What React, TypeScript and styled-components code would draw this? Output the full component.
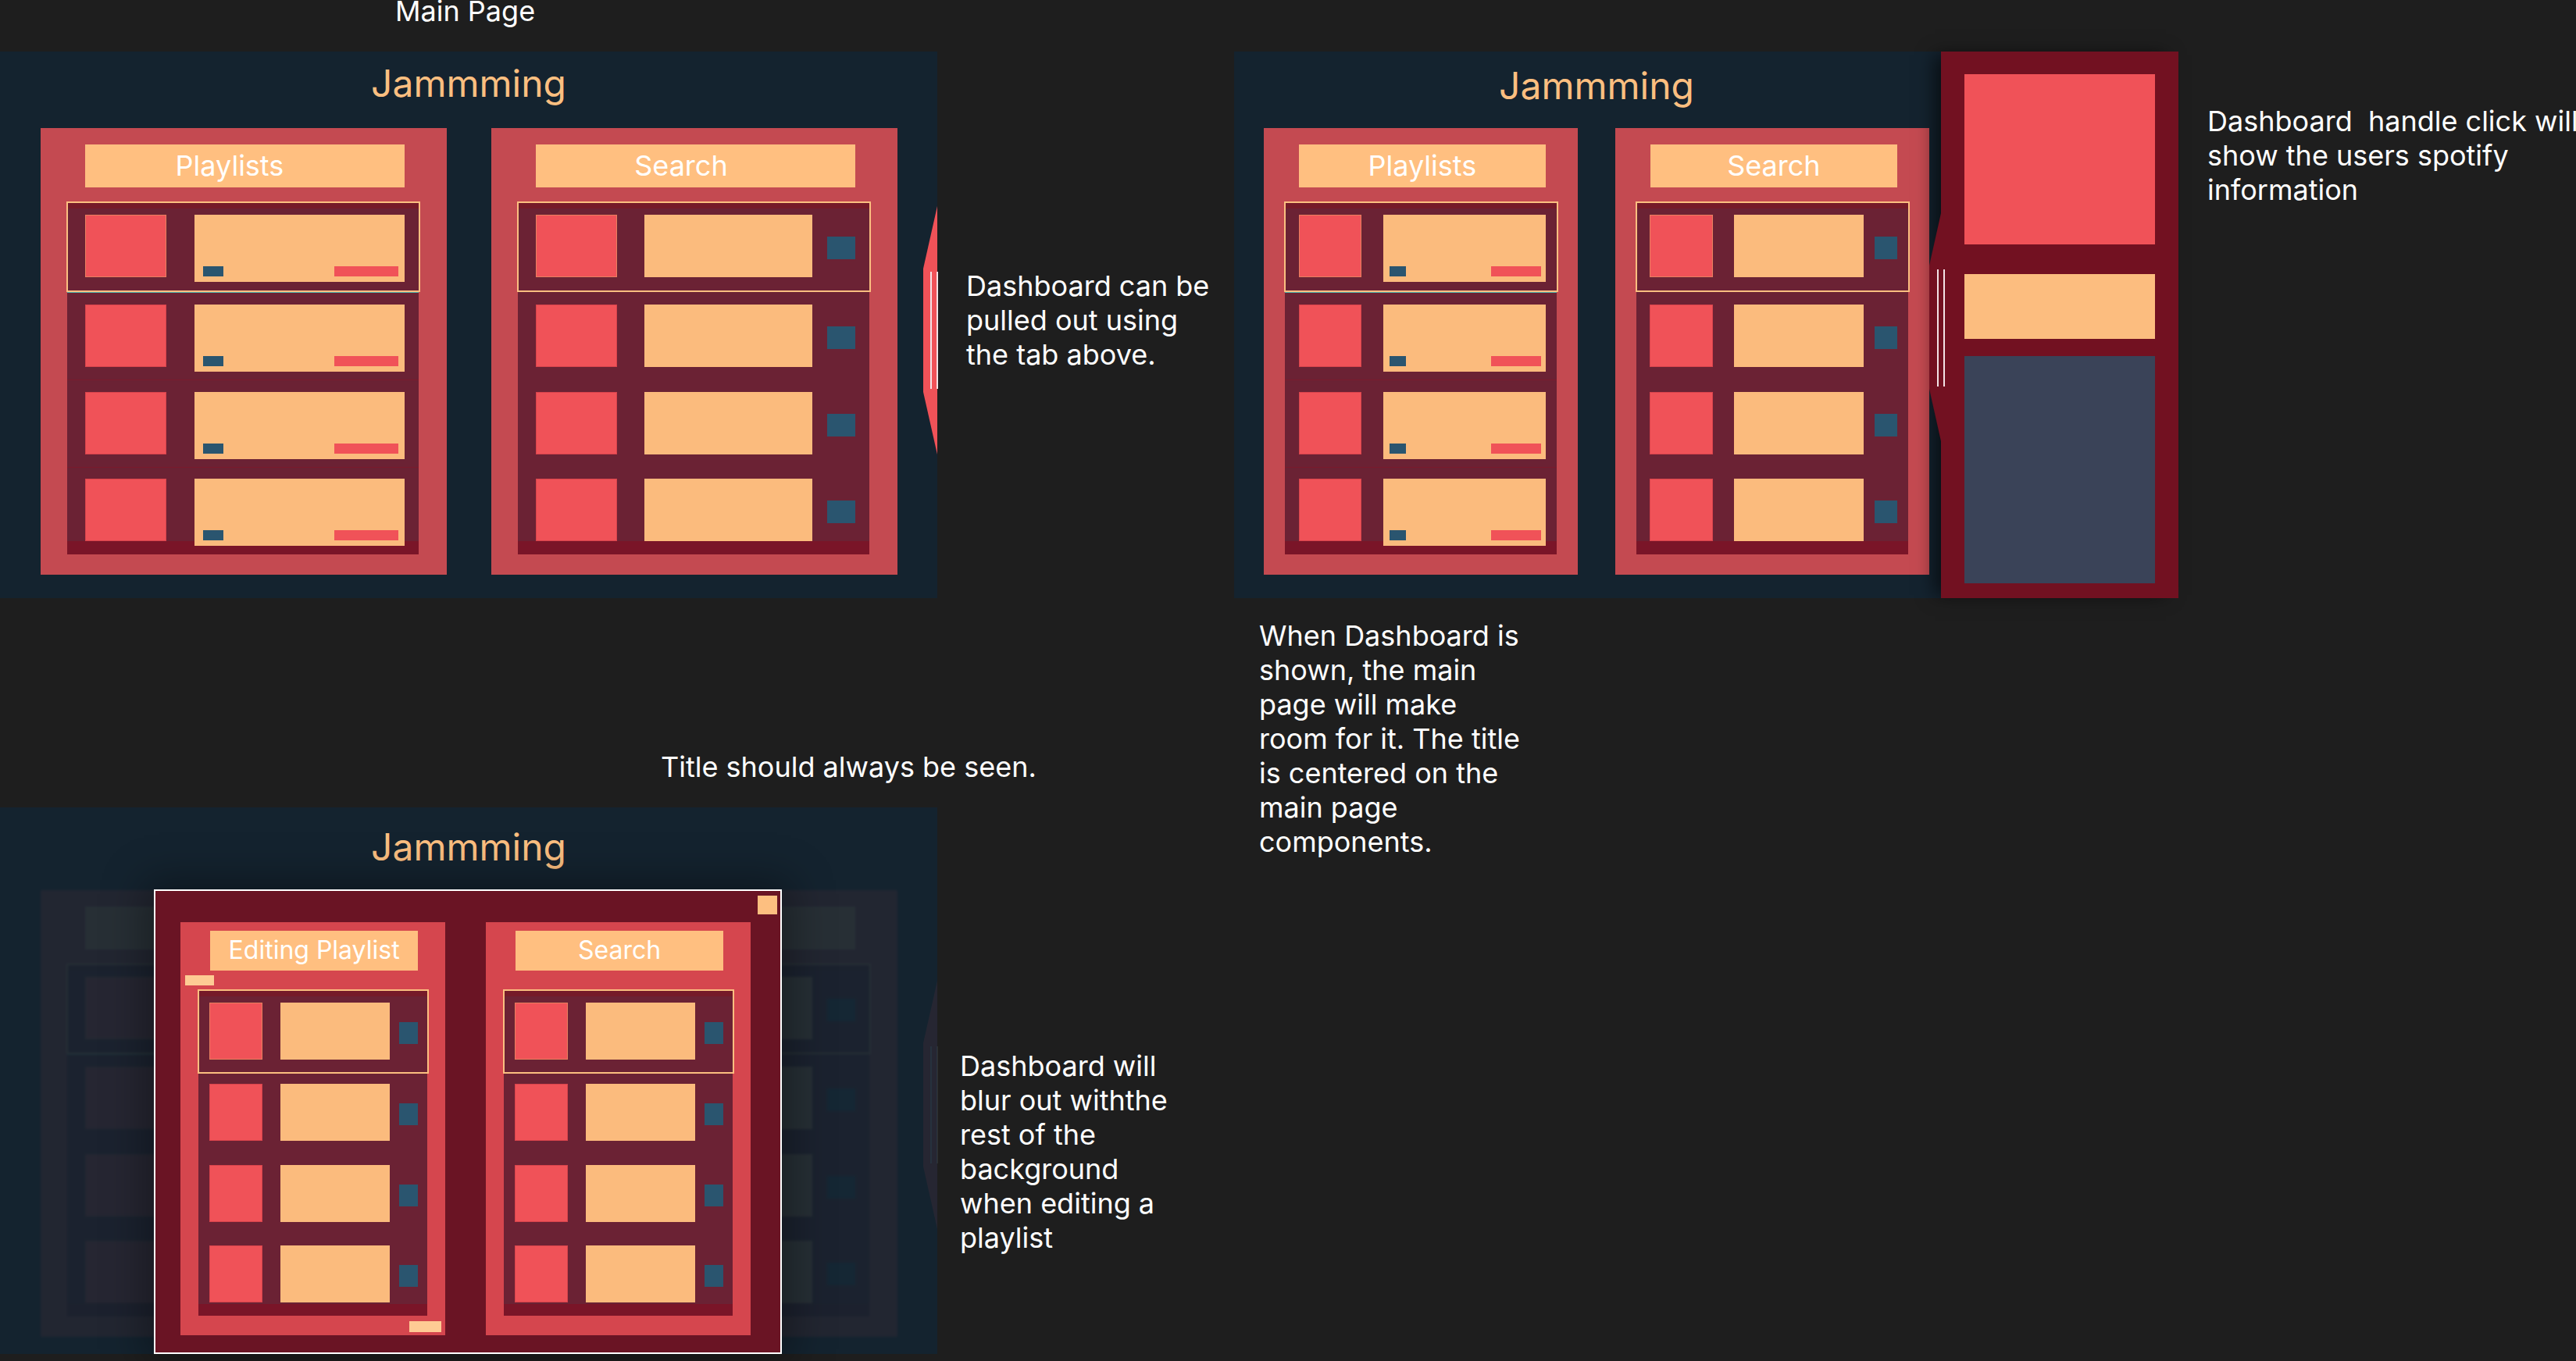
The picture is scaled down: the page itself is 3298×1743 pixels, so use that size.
import React from 'react';
import styled, { createGlobalStyle, css } from 'styled-components';

const GlobalStyle = createGlobalStyle`
  html, body { margin: 0; padding: 0; background: #1e1e1e; overflow: hidden; }
  body { font-family: Inter, "Noto Sans", "Liberation Sans", sans-serif; }
  * { box-sizing: border-box; }
`;

type Dims = {
  panelH: number; headTop: number; headH: number; font: number;
  listGap: number; listH: number; rowH: number[]; itemTop: number[];
  redH: number; cardH: number; sCardH: number; blueH: number;
  topStrip: number; bottomStrip: number;
};

const BIG: Dims = {
  panelH: 572, headTop: 21, headH: 55, font: 36, listGap: 19, listH: 451,
  rowH: [115, 112, 112, 112], itemTop: [16, 16, 16, 15],
  redH: 80, cardH: 86, sCardH: 80, blueH: 29, topStrip: 8, bottomStrip: 17,
};

const SMALL: Dims = {
  panelH: 529, headTop: 11, headH: 51, font: 32, listGap: 25, listH: 417,
  rowH: [107, 104, 103, 103], itemTop: [16, 13, 13, 13],
  redH: 73, cardH: 73, sCardH: 73, blueH: 28, topStrip: 8, bottomStrip: 15,
};

const Canvas = styled.div`
  position: relative;
  width: 3298px;
  height: 1743px;
  overflow: hidden;
  background: #1e1e1e;
`;

const Note = styled.div<{ $x: number; $y: number }>`
  position: absolute;
  left: ${p => p.$x}px;
  top: ${p => p.$y}px;
  color: #ffffff;
  font-size: 36px;
  line-height: 44px;
  white-space: pre;
`;

const Frame = styled.div<{ $x: number; $y: number; $w: number }>`
  position: absolute;
  left: ${p => p.$x}px;
  top: ${p => p.$y}px;
  width: ${p => p.$w}px;
  height: 700px;
  background: #14232f;
  display: flex;
  justify-content: center;
`;

const SplitFrame = styled(Frame)`
  justify-content: flex-start;
`;

const MainArea = styled.div`
  width: 905px;
  padding-left: 38px;
  display: flex;
`;

const MainColumn = styled.div<{ $pt: number; $gap: number }>`
  padding-top: ${p => p.$pt}px;
  display: flex;
  flex-direction: column;
  gap: ${p => p.$gap}px;
`;

const Title = styled.h1`
  margin: 0;
  font-size: 48px;
  line-height: 58px;
  font-weight: 400;
  color: #fbbf80;
  text-align: center;
`;

const PanelRow = styled.div<{ $gap: number }>`
  display: flex;
  gap: ${p => p.$gap}px;
`;

const Dimmed = styled.div`
  opacity: 0.08;
  filter: blur(1.5px);
`;

const PanelBox = styled.div<{ $w: number; $h: number; $bg: string }>`
  position: relative;
  flex: none;
  width: ${p => p.$w}px;
  height: ${p => p.$h}px;
  background: ${p => p.$bg};
  display: flex;
  flex-direction: column;
`;

const Header = styled.div<{ $top: number; $h: number; $font: number; $shift: number }>`
  margin: ${p => p.$top}px 0 0 11.15%;
  width: 78.65%;
  height: ${p => p.$h}px;
  padding-right: ${p => p.$shift}px;
  background: #ffbf80;
  color: #ffffff;
  font-size: ${p => p.$font}px;
  line-height: 1.21;
  display: flex;
  align-items: center;
  justify-content: center;
  white-space: nowrap;
`;

const Tag = styled.div<{ $w: number; $h: number; $m: string; $end?: boolean }>`
  flex: none;
  width: ${p => p.$w}px;
  height: ${p => p.$h}px;
  margin: ${p => p.$m};
  background: #fecb94;
  align-self: ${p => (p.$end ? 'flex-end' : 'flex-start')};
`;

const ListBox = styled.div<{ $mt: number; $h: number; $strip: number; $bottom: number }>`
  position: relative;
  margin: ${p => p.$mt}px 0 0 6.73%;
  width: 86.54%;
  height: ${p => p.$h}px;
  background: #6b2234;
  display: flex;
  flex-direction: column;
  &::before {
    content: '';
    position: absolute;
    left: 0;
    right: 0;
    top: 0;
    height: ${p => p.$strip}px;
    background: #751a29;
  }
  &::after {
    content: '';
    position: absolute;
    left: 0;
    right: 0;
    bottom: 0;
    height: ${p => p.$bottom}px;
    background: #7a1528;
  }
`;

const Row = styled.div<{ $h: number; $pt: number; $sel?: boolean; $sep?: string }>`
  position: relative;
  z-index: 1;
  flex: none;
  height: ${p => p.$h}px;
  padding-top: ${p => p.$pt}px;
  display: flex;
  align-items: flex-start;
  ${p => p.$sep && css`box-shadow: inset 0 1px 0 ${p.$sep};`}
  ${p =>
    p.$sel &&
    css`
      &::before {
        content: '';
        position: absolute;
        top: -1px;
        left: -1px;
        right: -2px;
        bottom: 0;
        border: 2px solid #fbbf80;
        pointer-events: none;
      }
    `}
`;

const Thumb = styled.div<{ $h: number; $ml: string; $w: string; $edge: string }>`
  flex: none;
  margin-left: ${p => p.$ml};
  width: ${p => p.$w};
  height: ${p => p.$h}px;
  background: #f05258;
  box-shadow: inset 0 0 0 1px ${p => p.$edge};
`;

const TrackCard = styled.div<{ $h: number; $ml: string; $w: string }>`
  flex: none;
  margin-left: ${p => p.$ml};
  width: ${p => p.$w};
  height: ${p => p.$h}px;
  background: #fbbb7d;
  display: flex;
  align-items: flex-end;
  justify-content: space-between;
  padding-bottom: 7px;
`;

const CardChip = styled.div`
  margin-left: 4.1%;
  width: 9.7%;
  height: 13px;
  background: #2a556f;
`;

const CardBar = styled.div`
  margin-right: 3%;
  width: 30.5%;
  height: 13px;
  background: #f05258;
`;

const AddButton = styled.div<{ $h: number; $mt: number }>`
  flex: none;
  margin-left: 4.2%;
  margin-top: ${p => p.$mt}px;
  width: 8.2%;
  height: ${p => p.$h}px;
  background: #2a556f;
`;

type PanelProps = {
  title: string;
  kind: 'playlist' | 'search';
  w: number;
  d: Dims;
  bg?: string;
  extras?: boolean;
  shift?: number;
};

function Panel({ title, kind, w, d, bg = '#c44a51', extras, shift = 0 }: PanelProps) {
  return (
    <PanelBox $w={w} $h={d.panelH} $bg={bg}>
      <Header $top={d.headTop} $h={d.headH} $font={d.font} $shift={shift}>{title}</Header>
      {extras && <Tag $w={37} $h={13} $m="6px 0 6px 6px" />}
      <ListBox $mt={extras ? 0 : d.listGap} $h={d.listH} $strip={d.topStrip} $bottom={d.bottomStrip}>
        {d.rowH.map((h, i) => {
          const sep =
            kind === 'playlist' ? (i === 1 ? '#4eb2ab' : i > 1 ? '#7a1a2c' : undefined) : undefined;
          const edge = i === 0 ? '#e8805f' : '#d8444c';
          return (
            <Row key={i} $h={h} $pt={d.itemTop[i]} $sel={i === 0} $sep={sep}>
              {kind === 'playlist' ? (
                <>
                  <Thumb $h={d.redH} $ml="5.1%" $w="23.1%" $edge={edge} />
                  <TrackCard $h={d.cardH} $ml="8%" $w="59.8%">
                    <CardChip />
                    <CardBar />
                  </TrackCard>
                </>
              ) : (
                <>
                  <Thumb $h={d.redH} $ml="4.9%" $w="23.2%" $edge={edge} />
                  <TrackCard $h={d.sCardH} $ml="7.8%" $w="47.7%" />
                  <AddButton $h={d.blueH} $mt={(d.redH - d.blueH) / 2 + 2.5} />
                </>
              )}
            </Row>
          );
        })}
      </ListBox>
      {extras && <Tag $w={41} $h={14} $m="7px 5px 0 0" $end />}
    </PanelBox>
  );
}

const HandleWrap = styled.div<{ $x: number; $y: number; $w: number; $h: number; $dim?: boolean }>`
  position: absolute;
  left: ${p => p.$x}px;
  top: ${p => p.$y}px;
  width: ${p => p.$w}px;
  height: ${p => p.$h}px;
  ${p => p.$dim && css`opacity: 0.08;`}
`;

const HandleTab = styled.div<{ $cut: number; $color: string; $tw: number }>`
  position: absolute;
  left: 0;
  top: 0;
  bottom: 0;
  width: ${p => p.$tw}px;
  background: ${p => p.$color};
  clip-path: polygon(100% 0, 0 ${p => p.$cut}px, 0 calc(100% - ${p => p.$cut}px), 100% 100%);
`;

const Grip = styled.div<{ $x: number; $top: number; $h: number }>`
  position: absolute;
  left: ${p => p.$x}px;
  top: ${p => p.$top}px;
  width: 2px;
  height: ${p => p.$h}px;
  background: #f3e3e6;
`;

type HandleProps = {
  x: number; y: number; w: number; tw: number; h: number; cut: number;
  color: string; grips: [number, number]; gripTop: number; dim?: boolean;
};

function Handle({ x, y, w, tw, h, cut, color, grips, gripTop, dim }: HandleProps) {
  return (
    <HandleWrap $x={x} $y={y} $w={w} $h={h} $dim={dim}>
      <HandleTab $cut={cut} $color={color} $tw={tw} />
      <Grip $x={grips[0]} $top={gripTop} $h={150} />
      <Grip $x={grips[1]} $top={gripTop} $h={150} />
    </HandleWrap>
  );
}

const Dashboard = styled.aside`
  position: relative;
  z-index: 2;
  flex: none;
  width: 304px;
  height: 100%;
  background: #721121;
  padding: 29px 30px 0;
  display: flex;
  flex-direction: column;
  box-shadow: -12px 0 22px -4px rgba(0, 0, 0, 0.6);
`;

const DashBlock = styled.div<{ $h: number; $mt: number; $bg: string }>`
  flex: none;
  height: ${p => p.$h}px;
  margin-top: ${p => p.$mt}px;
  background: ${p => p.$bg};
`;

const Modal = styled.div`
  position: absolute;
  left: 197px;
  top: 105px;
  width: 804px;
  height: 595px;
  border: 2px solid #ffffff;
  background: #6a1424;
  padding: 40px 38px 0 32px;
  display: flex;
  gap: 52px;
  box-shadow: 0 0 50px 12px rgba(0, 0, 0, 0.35);
`;

const CloseSquare = styled.div`
  position: absolute;
  top: 6px;
  right: 4px;
  width: 25px;
  height: 24px;
  background: #fdbf80;
`;

export default function App() {
  return (
    <Canvas>
      <GlobalStyle />

      <Note $x={506} $y={-8}>Main Page</Note>

      <Frame $x={0} $y={66} $w={1200}>
        <MainColumn $pt={12} $gap={28}>
          <Title>Jammming</Title>
          <PanelRow $gap={57}>
            <Panel title="Playlists" kind="playlist" w={520} d={BIG} shift={40} />
            <Panel title="Search" kind="search" w={520} d={BIG} shift={38} />
          </PanelRow>
        </MainColumn>
        <Handle x={1182} y={198} w={18} tw={18} h={318} cut={80} color="#f05258" grips={[9, 17]} gripTop={84} />
      </Frame>

      <Note $x={1237} $y={344}>{'Dashboard can be\npulled out using\nthe tab above.'}</Note>

      <SplitFrame $x={1580} $y={66} $w={1209}>
        <MainArea>
          <MainColumn $pt={15} $gap={25}>
            <Title>Jammming</Title>
            <PanelRow $gap={48}>
              <Panel title="Playlists" kind="playlist" w={402} d={BIG} />
              <Panel title="Search" kind="search" w={402} d={BIG} />
            </PanelRow>
          </MainColumn>
        </MainArea>
        <Dashboard>
          <Handle x={-15} y={207} w={20} tw={15} h={292} cut={67} color="#721121" grips={[10, 18]} gripTop={72} />
          <DashBlock $h={218} $mt={0} $bg="#f05258" />
          <DashBlock $h={83} $mt={38} $bg="#fcbd7f" />
          <DashBlock $h={291} $mt={22} $bg="#3a4358" />
        </Dashboard>
      </SplitFrame>

      <Note $x={2826} $y={133}>{'Dashboard  handle click will\nshow the users spotify\ninformation'}</Note>

      <Note $x={1612} $y={792}>
        {'When Dashboard is\nshown, the main\npage will make\nroom for it. The title\nis centered on the\nmain page\ncomponents.'}
      </Note>

      <Note $x={846} $y={960}>Title should always be seen.</Note>

      <Frame $x={0} $y={1034} $w={1200}>
        <MainColumn $pt={22} $gap={26}>
          <Title>Jammming</Title>
          <Dimmed>
            <PanelRow $gap={57}>
              <Panel title="" kind="playlist" w={520} d={BIG} />
              <Panel title="" kind="search" w={520} d={BIG} />
            </PanelRow>
          </Dimmed>
        </MainColumn>
        <Handle x={1182} y={222} w={18} tw={18} h={318} cut={80} color="#f05258" grips={[9, 17]} gripTop={84} dim />
        <Modal>
          <CloseSquare />
          <Panel title="Editing Playlist" kind="search" w={339} d={SMALL} bg="#d5464e" extras />
          <Panel title="Search" kind="search" w={339} d={SMALL} bg="#d5464e" />
        </Modal>
      </Frame>

      <Note $x={1229} $y={1343}>
        {'Dashboard will\nblur out withthe\nrest of the\nbackground\nwhen editing a\nplaylist'}
      </Note>
    </Canvas>
  );
}
